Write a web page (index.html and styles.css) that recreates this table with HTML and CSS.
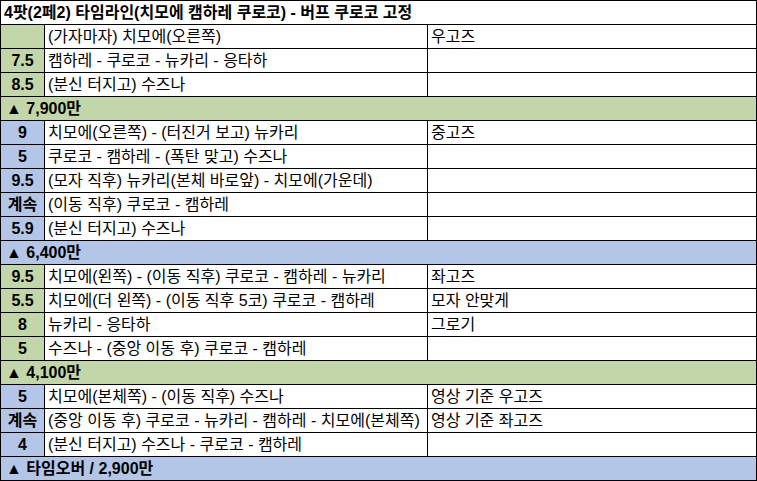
FILE: index.html
```html
<!DOCTYPE html>
<html lang="ko">
<head>
<meta charset="utf-8">
<link rel="stylesheet" href="styles.css">
</head>
<body>
<div class="sheet">
  <div class="cell title span">4팟(2페2) 타임라인(치모에 캠하레 쿠로코) - 버프 쿠로코 고정</div>

  <div class="cell num green"></div>
  <div class="cell">(가자마자) 치모에(오른쪽)</div>
  <div class="cell">우고즈</div>

  <div class="cell num green">7.5</div>
  <div class="cell">캠하레 - 쿠로코 - 뉴카리 - 응타하</div>
  <div class="cell"></div>

  <div class="cell num green">8.5</div>
  <div class="cell">(분신 터지고) 수즈나</div>
  <div class="cell"></div>

  <div class="cell section span green">▲ 7,900만</div>

  <div class="cell num blue">9</div>
  <div class="cell">치모에(오른쪽) - (터진거 보고) 뉴카리</div>
  <div class="cell">중고즈</div>

  <div class="cell num blue">5</div>
  <div class="cell">쿠로코 - 캠하레 - (폭탄 맞고) 수즈나</div>
  <div class="cell"></div>

  <div class="cell num blue">9.5</div>
  <div class="cell">(모자 직후) 뉴카리(본체 바로앞) - 치모에(가운데)</div>
  <div class="cell"></div>

  <div class="cell num blue">계속</div>
  <div class="cell">(이동 직후) 쿠로코 - 캠하레</div>
  <div class="cell"></div>

  <div class="cell num blue">5.9</div>
  <div class="cell">(분신 터지고) 수즈나</div>
  <div class="cell"></div>

  <div class="cell section span blue">▲ 6,400만</div>

  <div class="cell num green">9.5</div>
  <div class="cell">치모에(왼쪽) - (이동 직후) 쿠로코 - 캠하레 - 뉴카리</div>
  <div class="cell">좌고즈</div>

  <div class="cell num green">5.5</div>
  <div class="cell">치모에(더 왼쪽) - (이동 직후 5코) 쿠로코 - 캠하레</div>
  <div class="cell">모자 안맞게</div>

  <div class="cell num green">8</div>
  <div class="cell">뉴카리 - 응타하</div>
  <div class="cell">그로기</div>

  <div class="cell num green">5</div>
  <div class="cell">수즈나 - (중앙 이동 후) 쿠로코 - 캠하레</div>
  <div class="cell"></div>

  <div class="cell section span green">▲ 4,100만</div>

  <div class="cell num blue">5</div>
  <div class="cell">치모에(본체쪽) - (이동 직후) 수즈나</div>
  <div class="cell">영상 기준 우고즈</div>

  <div class="cell num blue">계속</div>
  <div class="cell">(중앙 이동 후) 쿠로코 - 뉴카리 - 캠하레 - 치모에(본체쪽)</div>
  <div class="cell">영상 기준 좌고즈</div>

  <div class="cell num blue">4</div>
  <div class="cell">(분신 터지고) 수즈나 - 쿠로코 - 캠하레</div>
  <div class="cell"></div>

  <div class="cell section span blue">▲ 타임오버 / 2,900만</div>
</div>
</body>
</html>
```

FILE: styles.css
```css
html, body {
  margin: 0;
  padding: 0;
  background: #ffffff;
}

.sheet {
  display: grid;
  grid-template-columns: 43px 382px 328px;
  grid-auto-rows: 23px;
  gap: 1px;
  padding: 1px;
  width: 755px;
  background: #000000;
  font-family: "Liberation Sans", "Noto Sans CJK KR", sans-serif;
  font-size: 16px;
  color: #000000;
}

.cell {
  background: #ffffff;
  padding: 0 3px;
  display: flex;
  align-items: center;
  white-space: nowrap;
  overflow: hidden;
  line-height: 1;
}

.span {
  grid-column: 1 / -1;
}

.title {
  font-weight: bold;
  padding-left: 3px;
}

.section {
  font-weight: bold;
  padding-left: 5px;
}

.num {
  font-weight: bold;
  justify-content: center;
  padding: 0;
}

.green {
  background: #c3d6a9;
}

.blue {
  background: #b4c6e7;
}
```
